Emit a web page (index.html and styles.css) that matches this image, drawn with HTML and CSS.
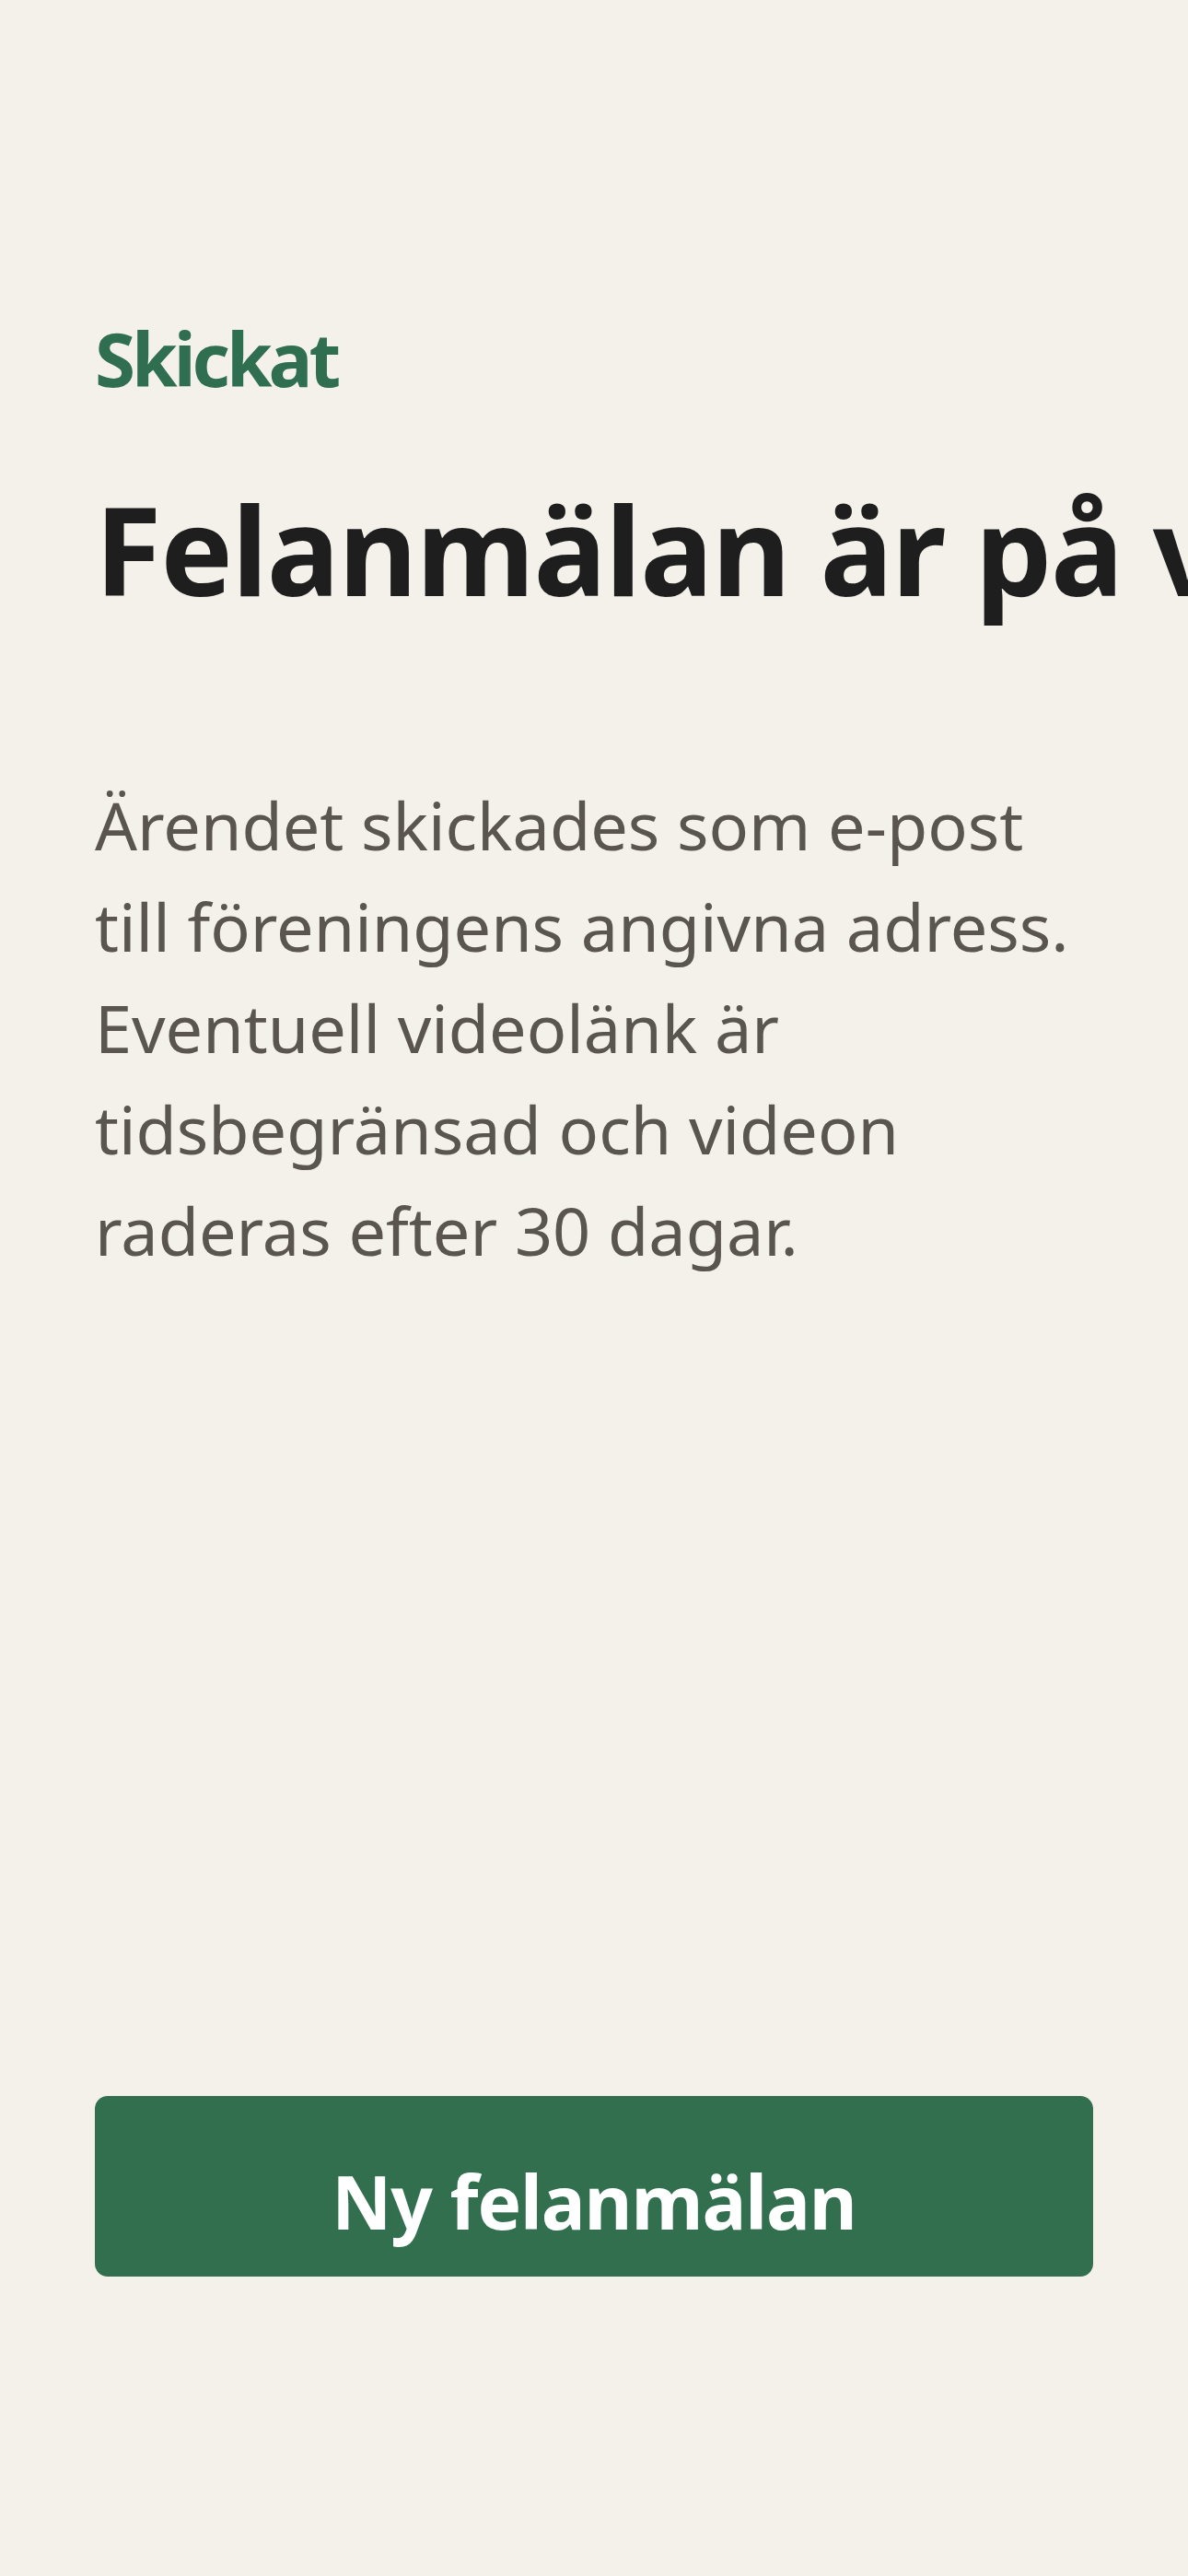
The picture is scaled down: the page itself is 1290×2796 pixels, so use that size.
FILE: index.html
```html
<!DOCTYPE html>
<html lang="sv">
<head>
<meta charset="utf-8">
<title>Skickat</title>
<link rel="stylesheet" href="styles.css">
</head>
<body>
<main class="page">
  <p class="eyebrow">Skickat</p>
  <h1 class="title">Felanmälan är på väg</h1>
  <p class="lead">Ärendet skickades som e-post till föreningens angivna adress. Eventuell videolänk är tidsbegränsad och videon raderas efter 30 dagar.</p>
  <button class="primary" type="button">Ny felanmälan</button>
</main>
</body>
</html>
```
FILE: styles.css
```css
html, body {
  margin: 0;
  padding: 0;
  background: #f4f1eb;
  overflow-x: hidden;
}
.page {
  box-sizing: border-box;
  min-height: 2796px;
  padding: 341px 103px 325px 103px;
  display: flex;
  flex-direction: column;
  font-family: "Noto Sans", "Open Sans", sans-serif;
}
.eyebrow {
  margin: 0;
  font-size: 80px;
  line-height: 96px;
  font-weight: 700;
  letter-spacing: -4px;
  color: #2f6f4f;
}
.title {
  margin: 80px 0 0 0;
  font-size: 132px;
  line-height: 158px;
  font-weight: 700;
  letter-spacing: -1.3px;
  color: #1e1e1e;
  white-space: nowrap;
}
.lead {
  margin: 165px 0 0 0;
  max-width: 1084px;
  font-size: 72px;
  line-height: 110px;
  color: #5a554f;
}
.primary {
  box-sizing: border-box;
  margin-top: auto;
  height: 196px;
  width: 100%;
  padding: 31px 0 0 0;
  border: 0;
  border-radius: 14px;
  background: #316f4f;
  color: #ffffff;
  font-family: inherit;
  font-size: 80px;
  font-weight: 700;
  letter-spacing: -1.1px;
  display: flex;
  align-items: center;
  justify-content: center;
}
```
